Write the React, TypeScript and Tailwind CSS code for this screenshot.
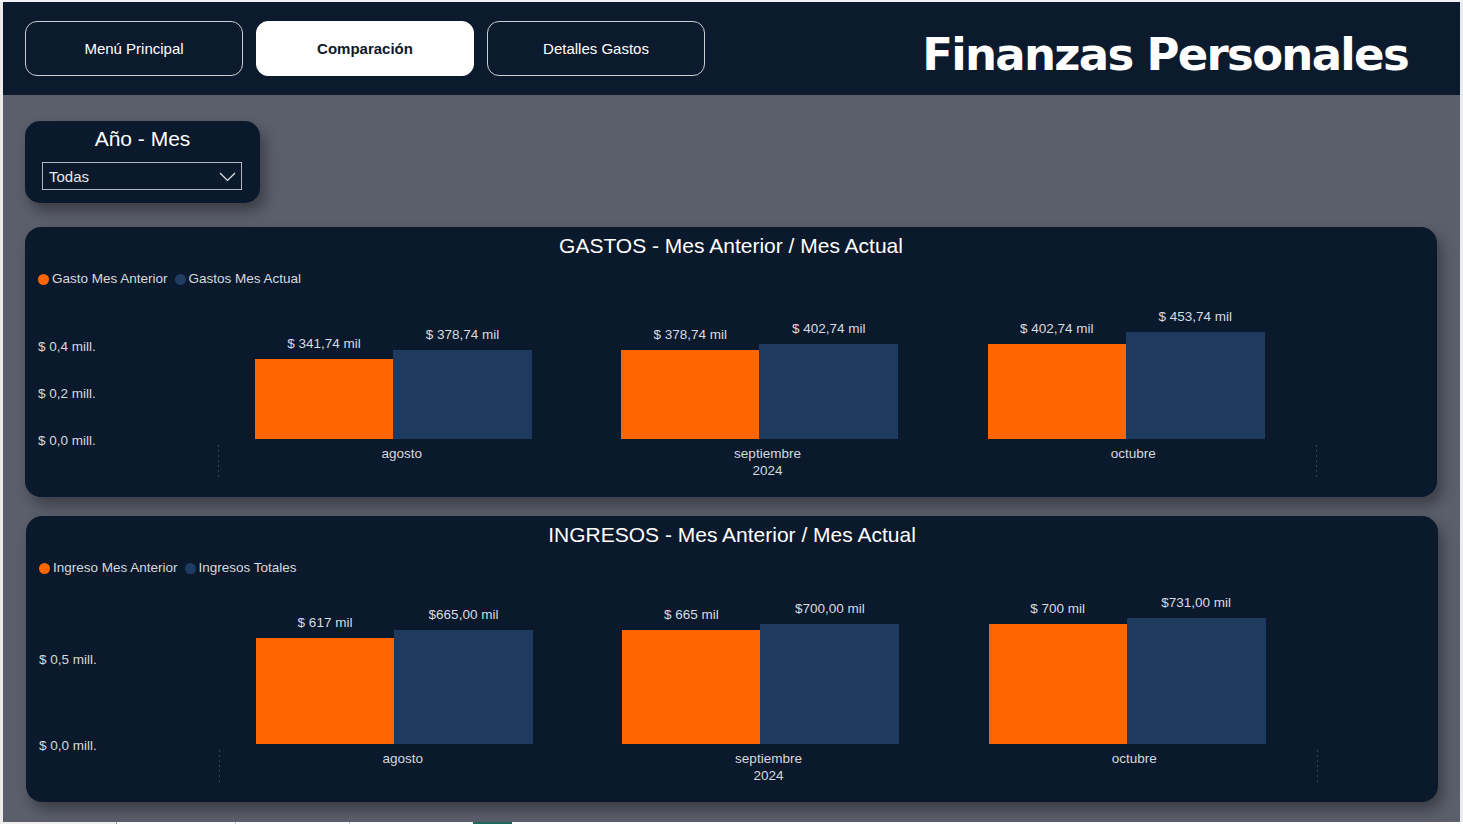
import React from "react";

type Group = { name: string; sub?: string; a: number; b: number; la: string; lb: string };

const gastos: Group[] = [
  { name: "agosto", a: 341.74, b: 378.74, la: "$ 341,74 mil", lb: "$ 378,74 mil" },
  { name: "septiembre", sub: "2024", a: 378.74, b: 402.74, la: "$ 378,74 mil", lb: "$ 402,74 mil" },
  { name: "octubre", a: 402.74, b: 453.74, la: "$ 402,74 mil", lb: "$ 453,74 mil" },
];

const ingresos: Group[] = [
  { name: "agosto", a: 617, b: 665, la: "$ 617 mil", lb: "$665,00 mil" },
  { name: "septiembre", sub: "2024", a: 665, b: 700, la: "$ 665 mil", lb: "$700,00 mil" },
  { name: "octubre", a: 700, b: 731, la: "$ 700 mil", lb: "$731,00 mil" },
];

function NavButton({ label, active }: { label: string; active?: boolean }) {
  return (
    <div
      className={
        active
          ? "flex h-[55px] w-[218px] items-center justify-center rounded-[12px] border border-white bg-white pt-[2px] text-[15px] font-bold text-[#111827]"
          : "flex h-[55px] w-[218px] items-center justify-center rounded-[12px] border border-[#c9ccd2] pt-[2px] text-[15px] text-white"
      }
    >
      {label}
    </div>
  );
}

function Bar({ value, label, scale, color }: { value: number; label: string; scale: number; color: string }) {
  return (
    <div className="flex flex-col items-center">
      <span className="mb-[7px] whitespace-nowrap text-[13.5px] leading-4 text-[#d9dce0]">{label}</span>
      <div className={color} style={{ height: (value / 1000) * scale }} />
    </div>
  );
}

// dotted guide at the edges of the category axis
function Dots() {
  return <div className="h-[35px] w-px bg-[linear-gradient(#34445a_50%,transparent_50%)] bg-[length:1px_5px]" />;
}

function Chart({
  title,
  legendA,
  legendB,
  plotH,
  scale,
  ticks,
  groups,
  className,
}: {
  title: string;
  legendA: string;
  legendB: string;
  plotH: string;
  scale: number;
  ticks: { v: number; label: string }[];
  groups: Group[];
  className: string;
}) {
  return (
    <section
      className={`w-[1412px] rounded-[16px] bg-[#0b192c] pt-[7px] shadow-[5px_8px_14px_rgba(0,0,0,0.35)] ${className}`}
    >
      <h2 className="text-center text-[21px] leading-6 text-white">{title}</h2>

      {/* Legend */}
      <div className="mt-[13px] flex items-center pl-[13px] text-[13.5px] leading-4 text-[#d6d9de]">
        <span className="mr-[3px] h-[11px] w-[11px] rounded-full bg-[#ff6600]" />
        <span>{legendA}</span>
        <span className="ml-[7px] mr-[3px] h-[11px] w-[11px] rounded-full bg-[#1f3d63]" />
        <span>{legendB}</span>
      </div>

      {/* Plot */}
      <div className={`flex ${plotH}`}>
        <div className="relative w-[193px]">
          {ticks.map((t) => (
            <span
              key={t.label}
              className="absolute left-[13px] whitespace-nowrap text-[13.5px] leading-4 text-[#d6d9de]"
              style={{ bottom: t.v * scale - 10 }}
            >
              {t.label}
            </span>
          ))}
        </div>
        <div className="flex w-[1099px]">
          {groups.map((g) => (
            <div key={g.name} className="flex flex-1 items-end pl-[37px]">
              <div className="w-[138px]">
                <Bar value={g.a} label={g.la} scale={scale} color="w-[138px] bg-[#ff6600]" />
              </div>
              <div className="w-[139px]">
                <Bar value={g.b} label={g.lb} scale={scale} color="w-[139px] bg-[#1f3a5f]" />
              </div>
            </div>
          ))}
        </div>
      </div>

      {/* Category axis */}
      <div className="flex h-[58px]">
        <div className="w-[193px]" />
        <div className="mt-[6px] flex h-[35px] w-[1099px]">
          <Dots />
          {groups.map((g) => (
            <div key={g.name} className="flex-1 text-center text-[13.5px] leading-[17px] text-[#d6d9de]">
              <div>{g.name}</div>
              {g.sub && <div>{g.sub}</div>}
            </div>
          ))}
          <Dots />
        </div>
      </div>
    </section>
  );
}

export default function App() {
  return (
    <div
      className="flex h-[824px] w-[1463px] flex-col bg-[#ebebeb]"
      style={{ fontFamily: '"Liberation Sans", Arial, sans-serif' }}
    >
      <div className="h-[2px] bg-[#f2f2f2]" />
      <div className="ml-[3px] flex h-[820px] w-[1457px] flex-col bg-[#5b5f6b]">
        {/* Header */}
        <header className="flex h-[93px] items-center gap-[13px] bg-[#0c1a2d] pl-[22px] pr-[52px]">
          <NavButton label="Menú Principal" />
          <NavButton label="Comparación" active />
          <NavButton label="Detalles Gastos" />
          <h1
            className="ml-auto self-start mt-[30px] text-[45px] font-bold leading-none tracking-[-1.7px] text-white"
            style={{ fontFamily: '"DejaVu Sans", Verdana, sans-serif' }}
          >
            Finanzas Personales
          </h1>
        </header>

        {/* Slicer */}
        <div className="ml-[22px] mt-[26px] h-[82px] w-[235px] rounded-[15px] bg-[#0b192c] pt-[6px] shadow-[5px_8px_14px_rgba(0,0,0,0.35)]">
          <div className="text-center text-[21px] leading-6 text-white">Año - Mes</div>
          <div className="ml-[17px] mt-[11px] flex h-[28px] w-[200px] items-center justify-between border border-[#b3b7bd] pl-[6px] pr-[5px] text-[15px] text-[#e6e8eb]">
            <span className="pt-[3px]">Todas</span>
            <svg width="17" height="10" viewBox="0 0 17 10" fill="none" className="mt-[2px]">
              <polyline points="1,1 8.5,8.5 16,1" stroke="#e6e8eb" strokeWidth="1.2" />
            </svg>
          </div>
        </div>

        <Chart
          className="ml-[22px] mt-[24px] h-[270px]"
          title="GASTOS - Mes Anterior / Mes Actual"
          legendA="Gasto Mes Anterior"
          legendB="Gastos Mes Actual"
          plotH="h-[152px]"
          scale={235}
          ticks={[
            { v: 0.4, label: "$ 0,4 mill." },
            { v: 0.2, label: "$ 0,2 mill." },
            { v: 0, label: "$ 0,0 mill." },
          ]}
          groups={gastos}
        />

        <Chart
          className="ml-[23px] mt-[19px] h-[286px]"
          title="INGRESOS - Mes Anterior / Mes Actual"
          legendA="Ingreso Mes Anterior"
          legendB="Ingresos Totales"
          plotH="h-[168px]"
          scale={172}
          ticks={[
            { v: 0.5, label: "$ 0,5 mill." },
            { v: 0, label: "$ 0,0 mill." },
          ]}
          groups={ingresos}
        />
      </div>

      {/* Sheet tabs strip */}
      <div className="flex h-[2px] bg-white">
        <div className="w-[117px] border-r border-[#9a9a9a] bg-[#efefef]" />
        <div className="w-[119px] border-r border-[#c8c8c8]" />
        <div className="w-[114px] border-r border-[#c8c8c8]" />
        <div className="w-[123px]" />
        <div className="w-[39px] bg-[#1e6b5c]" />
      </div>
    </div>
  );
}
